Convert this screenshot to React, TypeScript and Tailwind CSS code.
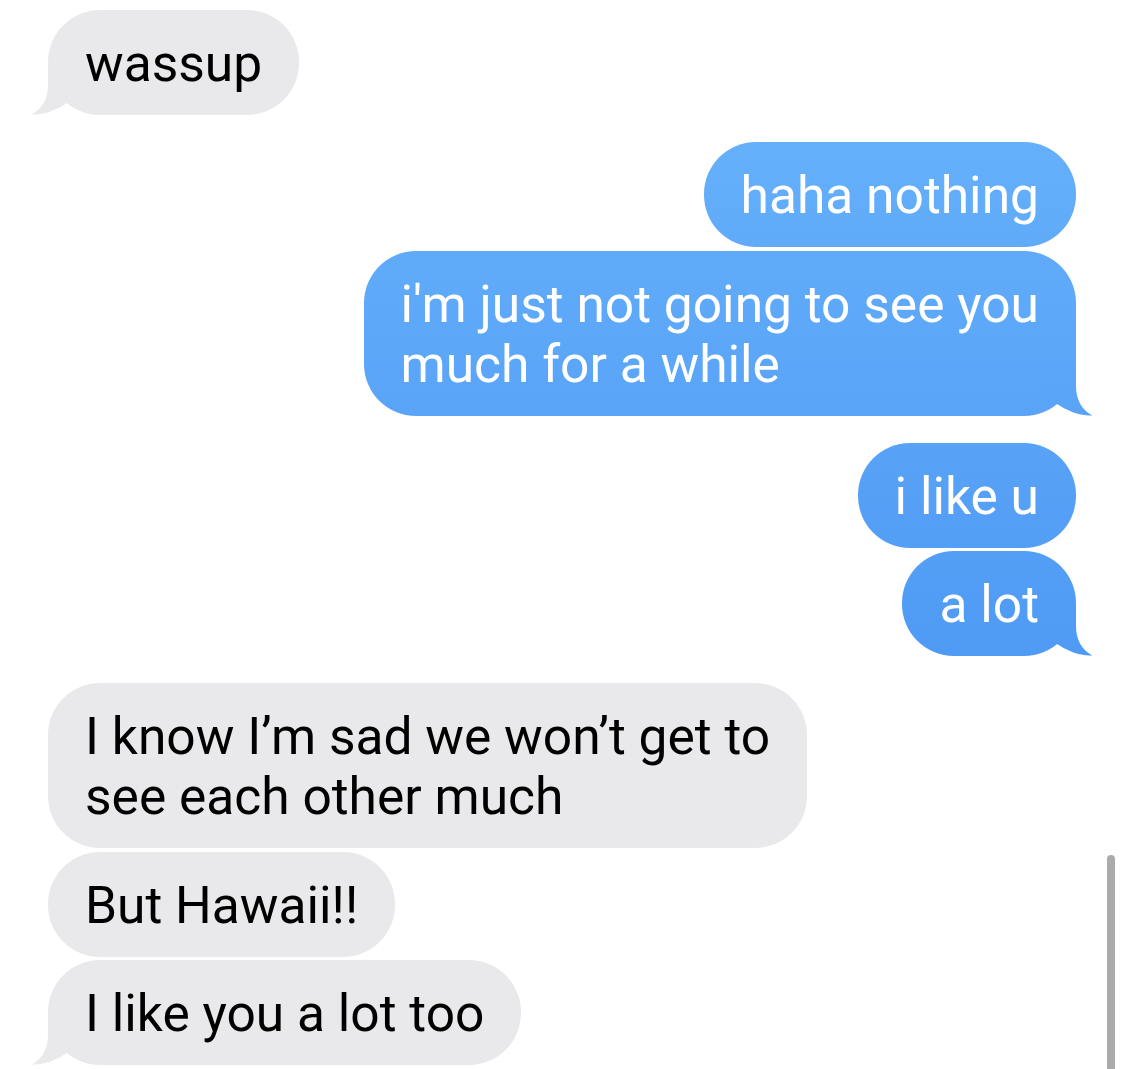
import clsx from "clsx";

type Message = {
  id: number;
  fromMe: boolean;
  lines: string[];
  tail?: boolean;
  // top / bottom colour of the tail, taken from the page gradient at that height
  tailColors?: [string, string];
  groupStart?: boolean;
};

const GRAY = "#e9e9eb";

const messages: Message[] = [
  { id: 1, fromMe: false, lines: ["wassup"], tail: true },
  { id: 2, fromMe: true, lines: ["haha nothing"], groupStart: true },
  {
    id: 3,
    fromMe: true,
    lines: ["i'm just not going to see you", "much for a while"],
    tail: true,
    tailColors: ["#5ba6f8", "#59a4f7"],
  },
  { id: 4, fromMe: true, lines: ["i like u"], groupStart: true },
  {
    id: 5,
    fromMe: true,
    lines: ["a lot"],
    tail: true,
    tailColors: ["#519cf5", "#4f9af4"],
  },
  {
    id: 6,
    fromMe: false,
    lines: ["I know I\u2019m sad we won\u2019t get to", "see each other much"],
    groupStart: true,
  },
  { id: 7, fromMe: false, lines: ["But Hawaii!!"] },
  { id: 8, fromMe: false, lines: ["I like you a lot too"], tail: true },
];

function Tail({ msg }: { msg: Message }) {
  const [top, bottom] = msg.tailColors ?? [GRAY, GRAY];
  const gradId = `tail-${msg.id}`;
  return (
    <svg
      viewBox="0 0 68 52"
      className={clsx(
        "absolute bottom-0 h-[52px] w-[68px]",
        msg.fromMe ? "right-[-16px] -scale-x-100" : "left-[-16px]"
      )}
    >
      <defs>
        <linearGradient id={gradId} x1="0" y1="0" x2="0" y2="1">
          <stop offset="0" stopColor={top} />
          <stop offset="1" stopColor={bottom} />
        </linearGradient>
      </defs>
      <path
        d="M16 0 L16 22 C16 36 10 46 -0.5 51.5 C12 52.5 26 46 35 40 L48 32 L48 0 Z"
        fill={`url(#${gradId})`}
      />
    </svg>
  );
}

function Bubble({ msg, first }: { msg: Message; first: boolean }) {
  return (
    <div
      className={clsx(
        "relative whitespace-nowrap rounded-[52px] px-[37px] pt-[24px] pb-[21px] text-[51.5px] leading-[60px]",
        msg.fromMe
          ? "self-end mr-[49px] bg-linear-to-b from-[#6bb5fc] to-[#3d89ef] bg-fixed text-white"
          : "self-start ml-[48px] bg-[#e9e9eb] text-black",
        first ? "" : msg.groupStart ? "mt-[27px]" : "mt-[3.5px]"
      )}
    >
      {msg.tail && <Tail msg={msg} />}
      <div className="relative">
        {msg.lines.map((line, i) => (
          <div key={i}>{line}</div>
        ))}
      </div>
    </div>
  );
}

export default function App() {
  return (
    <div
      className="relative flex h-[1069px] w-full flex-col overflow-hidden bg-white pt-[10px]"
      style={{ fontFamily: 'Roboto, "Liberation Sans", Arial, sans-serif' }}
    >
      {messages.map((m, i) => (
        <Bubble key={m.id} msg={m} first={i === 0} />
      ))}

      {/* scroll indicator */}
      <div className="absolute right-[10px] top-[855px] h-[214px] w-[8px] rounded-t-full bg-[#ababab]" />
    </div>
  );
}
